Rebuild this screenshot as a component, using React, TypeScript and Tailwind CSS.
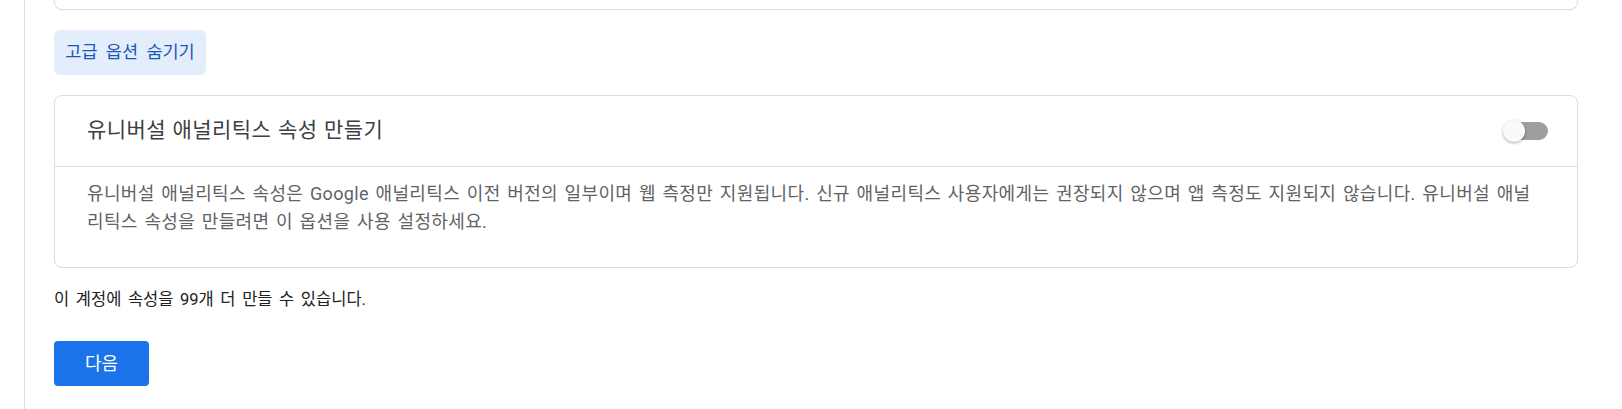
import { useState } from 'react';

const font = { fontFamily: 'Roboto, "Noto Sans CJK KR", sans-serif' };

export default function App() {
  const [ua, setUa] = useState(false);

  return (
    <div className="flex min-h-[409px] bg-white" style={font}>
      {/* 왼쪽 레일 */}
      <div className="w-[25px] shrink-0 border-r border-[#dadce0]" />

      <div className="flex-1 pl-[29px] pr-[44px]">
        {/* 위 카드 (잘림) */}
        <div className="h-[10px] rounded-b-lg border-x border-b border-[#dadce0]" />

        <button className="mt-5 h-[45px] w-[152px] rounded-md bg-[#e3edfb] text-[17.5px] text-[#1a56b8] [word-spacing:4px]">
          고급 옵션 숨기기
        </button>

        {/* 유니버설 애널리틱스 */}
        <div className="mt-5 rounded-lg border border-[#dadce0]">
          <div className="flex h-[71px] items-center justify-between border-b border-[#dadce0] pl-8 pr-7">
            <span className="text-[21px] tracking-[0.02em] text-[#3c4043] [word-spacing:1px]">유니버설 애널리틱스 속성 만들기</span>
            <button onClick={() => setUa(!ua)} className="relative h-[22px] w-[46px]">
              <span className={['absolute left-[10px] top-[2px] h-[18px] w-[35px] rounded-full', ua ? 'bg-[#8ab4f8]' : 'bg-[#9e9e9e]'].join(' ')} />
              <span className={['absolute top-0 h-[22px] w-[22px] rounded-full shadow-[0_1px_3px_rgba(0,0,0,0.35)]', ua ? 'left-[24px] bg-[#1a73e8]' : 'left-0 bg-[#fafafa]'].join(' ')} />
            </button>
          </div>
          <p className="pl-8 pr-8 pt-[13px] pb-[31px] text-[18px] leading-[28px] tracking-[0.02em] text-[#5f6368] [word-spacing:1.8px]">
            유니버설 애널리틱스 속성은 Google 애널리틱스 이전 버전의 일부이며 웹 측정만 지원됩니다. 신규 애널리틱스 사용자에게는 권장되지 않으며 앱 측정도 지원되지 않습니다. 유니버설 애널리틱스 속성을 만들려면 이 옵션을 사용 설정하세요.
          </p>
        </div>

        <p className="mt-[22px] text-[16.5px] leading-5 text-[#202124] [word-spacing:2.5px]">이 계정에 속성을 99개 더 만들 수 있습니다.</p>

        <button className="mt-[31px] h-[45px] w-[95px] rounded bg-[#1a73e8] text-[18px] text-white">다음</button>
      </div>
    </div>
  );
}
